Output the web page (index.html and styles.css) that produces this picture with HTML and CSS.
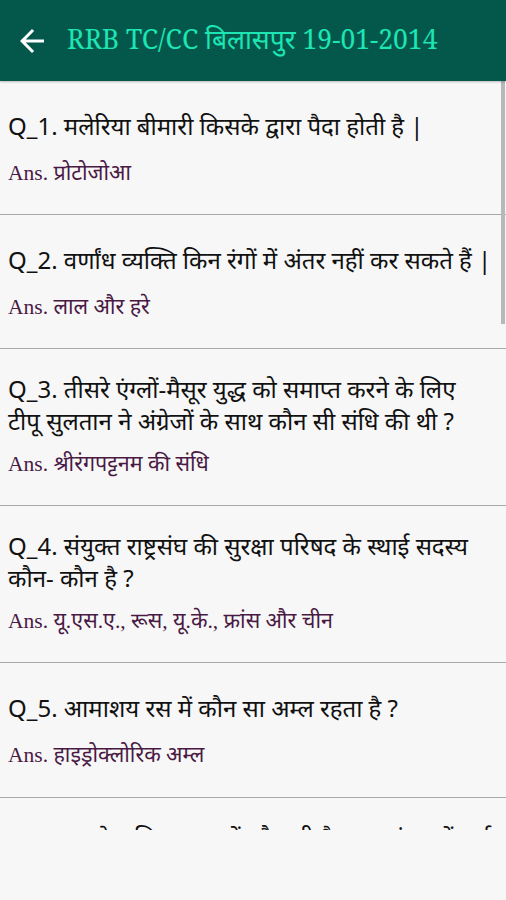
FILE: index.html
```html
<!DOCTYPE html>
<html>
<head>
    <meta charset="UTF-8">
    <meta name="viewport" content="width=device-width, initial-scale=1.0">
    <title>RRB TC/CC बिलासपुर 19-01-2014</title>
    <link rel="stylesheet" href="styles.css">
</head>
<body>
    <div class="toolbar">
        <svg class="back" viewBox="0 0 24 24" width="36" height="36">
            <path d="M20 11H7.83l5.59-5.59L12 4l-8 8 8 8 1.41-1.41L7.83 13H20v-2z" fill="#fff"/>
        </svg>
        <h1>RRB TC/CC बिलासपुर 19-01-2014</h1>
    </div>
    <div class="list">
        <div class="item">
            <div class="question">Q_1. मलेरिया बीमारी किसके द्वारा पैदा होती है |</div>
            <div class="answer">Ans. प्रोटोजोआ</div>
        </div>
        <div class="item">
            <div class="question">Q_2. वर्णांध व्यक्ति किन रंगों में अंतर नहीं कर सकते हैं |</div>
            <div class="answer">Ans. लाल और हरे</div>
        </div>
        <div class="item">
            <div class="question">Q_3. तीसरे एंग्लों-मैसूर युद्ध को समाप्त करने के लिए<br>टीपू सुलतान ने अंग्रेजों के साथ कौन सी संधि की थी ?</div>
            <div class="answer">Ans. श्रीरंगपट्टनम की संधि</div>
        </div>
        <div class="item">
            <div class="question">Q_4. संयुक्त राष्ट्रसंघ की सुरक्षा परिषद के स्थाई सदस्य कौन- कौन है ?</div>
            <div class="answer">Ans. यू.एस.ए., रूस, यू.के., फ्रांस और चीन</div>
        </div>
        <div class="item">
            <div class="question">Q_5. आमाशय रस में कौन सा अम्ल रहता है ?</div>
            <div class="answer">Ans. हाइड्रोक्लोरिक अम्ल</div>
        </div>
        <div class="item">
            <div class="question">Q_6. सबसे अधिक मात्रा में कौन सी गैस वायुमंडल में पाई जाती है ?</div>
            <div class="answer">Ans. नाइट्रोजन</div>
        </div>
        <div class="scrollbar"></div>
    </div>
</body>
</html>
```

FILE: styles.css
```css
body {
    margin: 0;
    padding: 0;
    background-color: #f7f7f7;
    font-family: "Noto Sans", "Noto Sans Devanagari", sans-serif;
}

.toolbar {
    height: 81px;
    background-color: #03584b;
    display: flex;
    align-items: center;
    box-shadow: 0 1px 2px rgba(0, 0, 0, 0.25);
    position: relative;
    z-index: 1;
}

.back {
    margin-left: 14px;
    margin-right: 17px;
}

h1 {
    margin: 0;
    font-family: "Noto Serif", "DejaVu Serif", "Noto Sans Devanagari", serif;
    font-weight: normal;
    font-size: 26.5px;
    color: #1de5b3;
}

.list {
    position: relative;
    height: 749px;
    overflow: hidden;
}

.item {
    padding: 24px 12px 27px 8px;
    border-bottom: 1px solid #a3aaa8;
}

.item:nth-child(5) {
    padding-bottom: 28px;
}

.question {
    min-height: 41px;
    display: flex;
    align-items: center;
    font-size: 24px;
    line-height: 32px;
    color: #111;
}

.answer {
    margin-top: 13px;
    font-size: 21.5px;
    line-height: 28px;
    color: #4a1a45;
    font-family: "Liberation Serif", "Noto Serif", "Noto Sans Devanagari", serif;
}

.scrollbar {
    position: absolute;
    top: 0;
    right: 1px;
    width: 4px;
    height: 243px;
    background-color: #b8b8b8;
}
```
